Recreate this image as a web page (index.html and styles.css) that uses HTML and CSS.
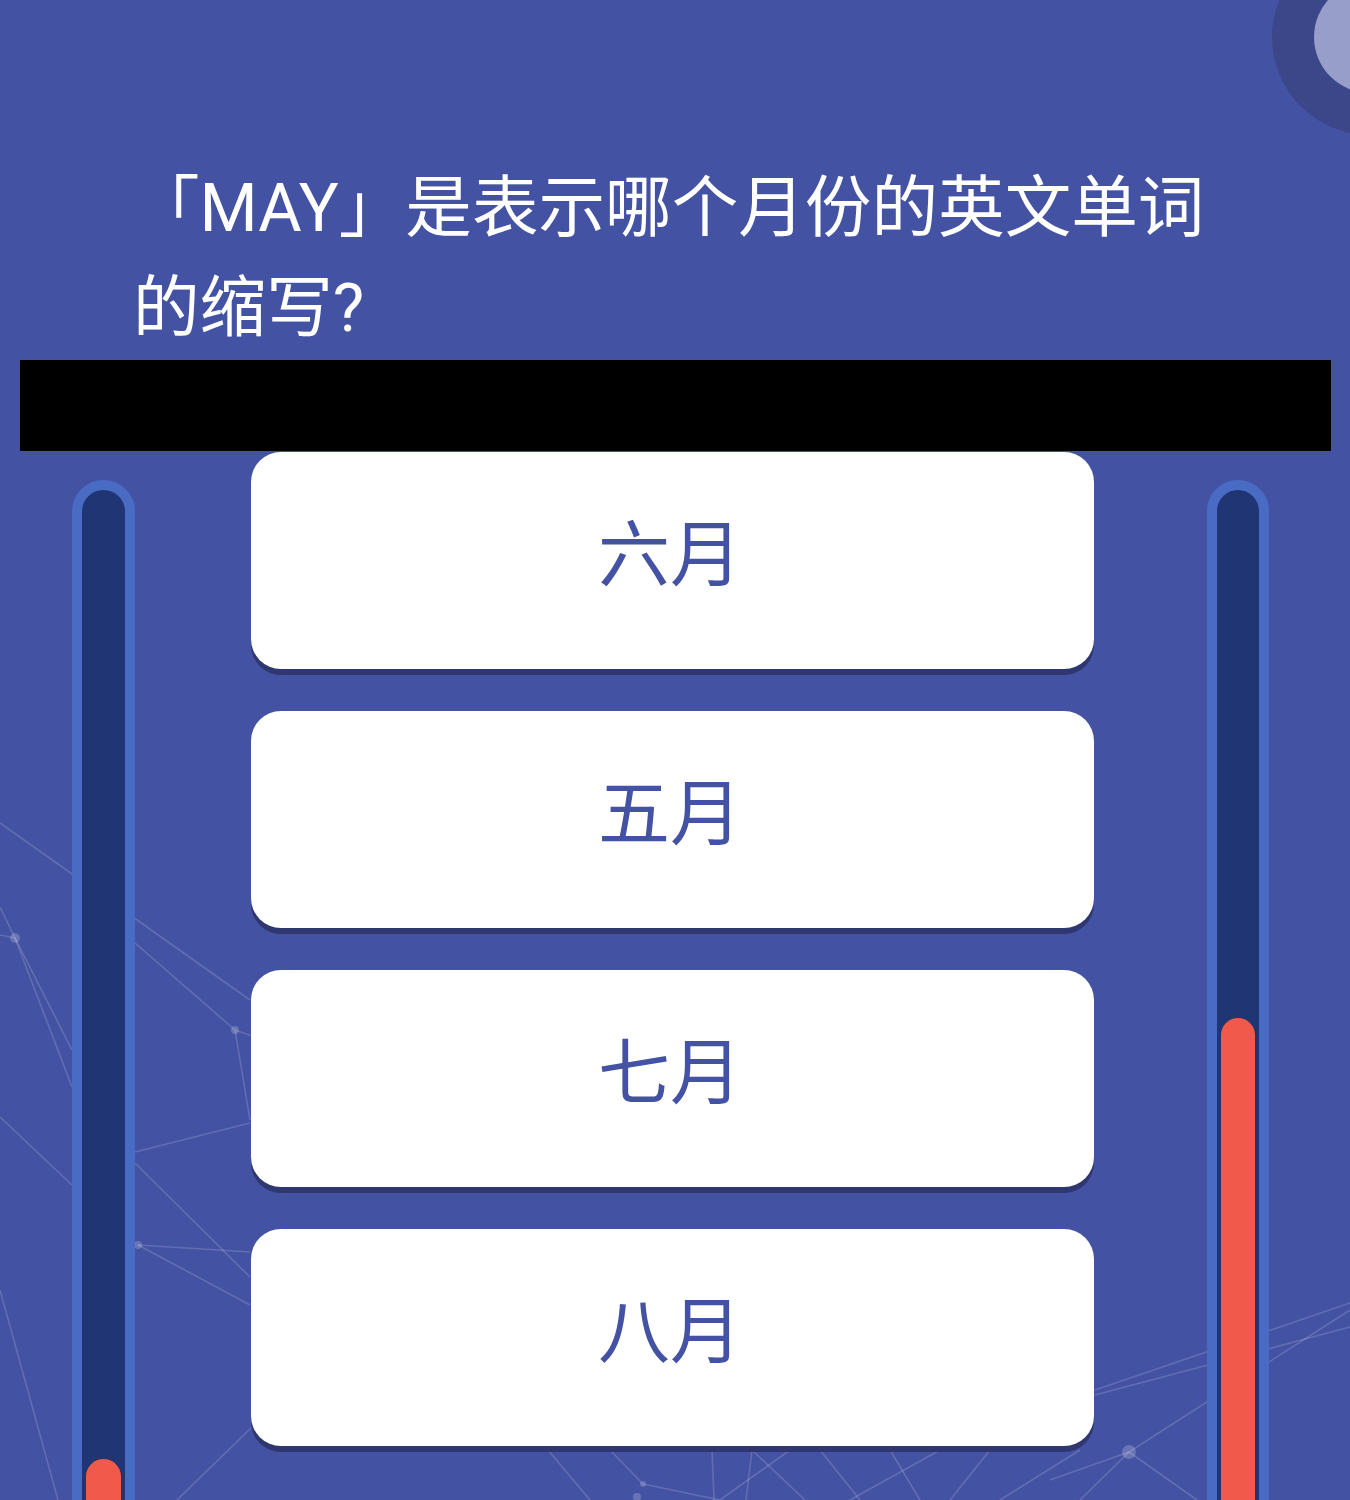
FILE: index.html
```html
<!DOCTYPE html>
<html lang="zh-CN">
<head>
<meta charset="utf-8">
<title>Quiz</title>
<link rel="stylesheet" href="styles.css">
</head>
<body>
<div class="page">
  <svg class="net" width="1350" height="1500" viewBox="0 0 1350 1500" aria-hidden="true">
    <g class="net-lines">
      <line x1="0" y1="823" x2="250" y2="1000"/>
      <line x1="0" y1="907" x2="15" y2="938"/>
      <line x1="0" y1="935" x2="15" y2="938"/>
      <line x1="15" y1="938" x2="72" y2="1050"/>
      <line x1="15" y1="938" x2="72" y2="1087"/>
      <line x1="0" y1="1117" x2="72" y2="1185"/>
      <line x1="0" y1="1290" x2="58" y2="1500"/>
      <line x1="135" y1="943" x2="235" y2="1030"/>
      <line x1="235" y1="1030" x2="252" y2="1036"/>
      <line x1="235" y1="1030" x2="250" y2="1120"/>
      <line x1="135" y1="1152" x2="250" y2="1123"/>
      <line x1="135" y1="1163" x2="250" y2="1277"/>
      <line x1="138" y1="1245" x2="250" y2="1252"/>
      <line x1="138" y1="1245" x2="250" y2="1305"/>
      <line x1="177" y1="1500" x2="252" y2="1427"/>
      <line x1="1095" y1="1390" x2="1350" y2="1303"/>
      <line x1="1095" y1="1395" x2="1350" y2="1327"/>
      <line x1="1129" y1="1452" x2="1350" y2="1310"/>
      <line x1="1129" y1="1452" x2="1050" y2="1480"/>
      <line x1="1129" y1="1452" x2="1080" y2="1500"/>
      <line x1="1129" y1="1452" x2="1197" y2="1500"/>
      <line x1="548" y1="1450" x2="590" y2="1500"/>
      <line x1="610" y1="1450" x2="643" y2="1484"/>
      <line x1="643" y1="1484" x2="720" y2="1500"/>
      <line x1="712" y1="1450" x2="714" y2="1500"/>
      <line x1="752" y1="1450" x2="746" y2="1500"/>
      <line x1="752" y1="1450" x2="805" y2="1500"/>
      <line x1="790" y1="1450" x2="720" y2="1500"/>
      <line x1="820" y1="1450" x2="860" y2="1500"/>
      <line x1="850" y1="1500" x2="940" y2="1450"/>
      <line x1="890" y1="1450" x2="920" y2="1500"/>
      <line x1="990" y1="1450" x2="950" y2="1500"/>
      <line x1="1000" y1="1500" x2="1080" y2="1450"/>
    </g>
    <g class="net-dots">
      <circle cx="15" cy="938" r="5"/>
      <circle cx="235" cy="1030" r="4"/>
      <circle cx="138" cy="1245" r="4"/>
      <circle cx="1129" cy="1452" r="7"/>
      <circle cx="643" cy="1484" r="3"/>
      <circle cx="637" cy="1497" r="4"/>
    </g>
  </svg>

  <div class="corner"><div class="corner-core"></div></div>

  <h1 class="question">「MAY」是表示哪个月份的英文单词的缩写?</h1>

  <div class="banner"></div>

  <div class="play">
    <div class="tube"><div class="fill" style="height:107px"></div></div>
    <div class="options">
      <div class="option">六月</div>
      <div class="option">五月</div>
      <div class="option">七月</div>
      <div class="option">八月</div>
    </div>
    <div class="tube tube-right"><div class="fill" style="height:548px"></div></div>
  </div>
</div>
</body>
</html>
```

FILE: styles.css
```css
html, body {
  margin: 0;
  padding: 0;
  height: 1500px;
  overflow: hidden;
  background: #4452a3;
}

.page {
  position: relative;
  height: 1500px;
  overflow: hidden;
  font-family: Roboto, "Noto Sans CJK SC", sans-serif;
}

.net {
  position: absolute;
  left: 0;
  top: 0;
}

.net-lines line {
  stroke: rgba(255, 255, 255, 0.16);
  stroke-width: 1.6;
}

.net-dots circle {
  fill: rgba(255, 255, 255, 0.2);
}

.corner {
  position: absolute;
  left: 1272px;
  top: -61px;
  width: 196px;
  height: 196px;
  border-radius: 50%;
  background: #3b4789;
  display: flex;
  align-items: center;
  justify-content: center;
}

.corner-core {
  width: 112px;
  height: 112px;
  border-radius: 50%;
  background: #979ec9;
}

.question {
  position: relative;
  margin: 0;
  padding: 158px 133px 0;
  height: 202px;
  box-sizing: content-box;
  font-size: 66.6px;
  line-height: 100px;
  font-weight: 400;
  color: #ffffff;
  overflow: hidden;
}

.banner {
  position: relative;
  height: 91px;
  margin: 0 19px 0 20px;
  background: #000000;
}

.play {
  position: relative;
  display: flex;
  align-items: flex-start;
  padding-left: 72px;
}

.tube {
  box-sizing: border-box;
  width: 63px;
  height: 1100px;
  margin-top: 29px;
  border: 10px solid #4a6bc4;
  border-radius: 32px;
  background: #1f3574;
  padding: 4px;
  display: flex;
  flex-direction: column;
  justify-content: flex-end;
  flex-shrink: 0;
}

.tube-right {
  width: 62px;
  margin-left: 113px;
}

.fill {
  background: #f15a4a;
  border-radius: 18px;
  box-shadow: 0 0 0 1px #24336e;
}

.options {
  margin-left: 116px;
  width: 843px;
  padding-top: 1px;
  display: flex;
  flex-direction: column;
  gap: 42px;
  flex-shrink: 0;
}

.option {
  height: 217px;
  background: #ffffff;
  border-radius: 30px;
  box-shadow: 0 6px 0 #2f3771;
  display: flex;
  align-items: center;
  justify-content: center;
  font-size: 72px;
  line-height: 1;
  color: #4452a3;
  padding-bottom: 10px;
  padding-right: 5px;
  box-sizing: border-box;
}
```
